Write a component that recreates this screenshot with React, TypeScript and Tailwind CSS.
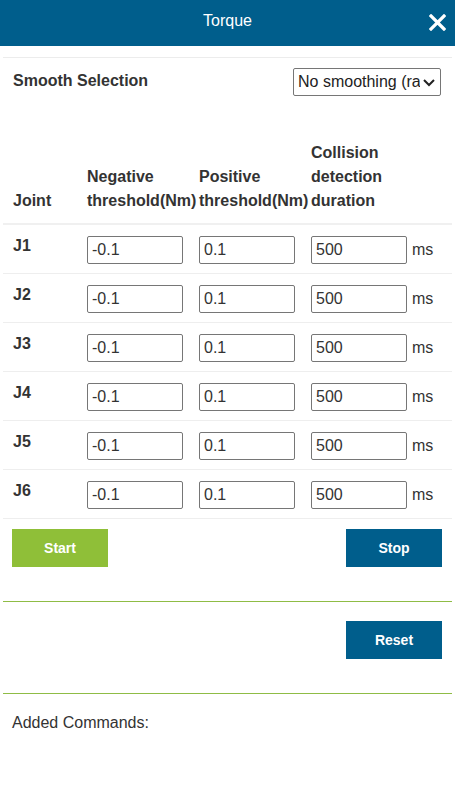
import React from "react";

const rows = ["J1", "J2", "J3", "J4", "J5", "J6"];

function Field({ value }: { value: string }) {
  return (
    <div className="mt-[11px] h-[28px] w-[96px] rounded-[2px] border border-[#767676] bg-white pl-[4px] text-[16px] leading-[26px] text-[#333]">
      {value}
    </div>
  );
}

export default function App() {
  return (
    <div
      className="w-[455px] h-[800px] bg-white text-[#333]"
      style={{ fontFamily: '"Liberation Sans", Arial, sans-serif' }}
    >
      <div className="relative flex h-[46px] items-start justify-center bg-[#005e8c]">
        <span className="mt-[11px] text-[16px] leading-[20px] text-white">Torque</span>
        <svg
          className="absolute right-[9px] top-[14px]"
          width="17"
          height="17"
          viewBox="0 0 17 17"
        >
          <path
            d="M2 2 L15 15 M15 2 L2 15"
            stroke="white"
            strokeWidth="3.2"
            strokeLinecap="square"
          />
        </svg>
      </div>
      <div className="h-[12px] border-b border-[#ececec] mx-[3px]" />
      <div className="mx-[3px] flex h-[75px] items-start justify-between pl-[10px] pr-[11px] pt-[10px]">
        <span className="mt-[1px] text-[16px] font-bold leading-[24px] text-[#333]">
          Smooth Selection
        </span>
        <div className="flex h-[28px] w-[148px] items-center overflow-hidden rounded-[2px] border border-[#767676] bg-white">
          <span className="w-[126px] overflow-hidden whitespace-nowrap pl-[4px] text-[16px] text-[#222]">
            No smoothing (ra
          </span>
          <svg width="16" height="16" viewBox="0 0 16 16" className="ml-[1px]">
            <path d="M3 6 L8 11 L13 6" stroke="#222" strokeWidth="2" fill="none" />
          </svg>
        </div>
      </div>

      <div className="mx-[3px]">
        <div className="grid grid-cols-[74px_112px_112px_1fr] items-end border-b-2 border-[#f0f0f0] pl-[10px] pr-[10px] pt-[8px] pb-[10px] text-[16px] font-bold leading-[24px] text-[#333]">
          <div>Joint</div>
          <div>Negative threshold(Nm)</div>
          <div>Positive threshold(Nm)</div>
          <div>Collision detection duration</div>
        </div>
        {rows.map((j) => (
          <div
            key={j}
            className="grid h-[49px] grid-cols-[74px_112px_112px_1fr] border-b border-[#eeeeee] pl-[10px] pr-[10px]"
          >
            <div className="pt-[9px] text-[16px] font-bold leading-[24px] text-[#333]">
              {j}
            </div>
            <Field value="-0.1" />
            <Field value="0.1" />
            <div className="flex items-start">
              <Field value="500" />
              <span className="ml-[5px] mt-[13px] text-[16px] leading-[24px] text-[#333]">
                ms
              </span>
            </div>
          </div>
        ))}
      </div>

      <div className="mt-[10px] flex justify-between pl-[12px] pr-[13px]">
        <button className="h-[38px] w-[96px] bg-[#8fbf38] text-[14px] font-bold text-white">
          Start
        </button>
        <button className="h-[38px] w-[96px] bg-[#005e8c] text-[14px] font-bold text-white">
          Stop
        </button>
      </div>
      <div className="mx-[3px] mt-[34px] h-px bg-[#8fbc45]" />
      <div className="mt-[19px] flex justify-end pr-[13px]">
        <button className="h-[38px] w-[96px] bg-[#005e8c] text-[14px] font-bold text-white">
          Reset
        </button>
      </div>
      <div className="mx-[3px] mt-[34px] h-px bg-[#8fbc45]" />
      <div className="mt-[17px] pl-[12px] text-[16px] leading-[24px] text-[#333]">
        Added Commands:
      </div>
    </div>
  );
}
